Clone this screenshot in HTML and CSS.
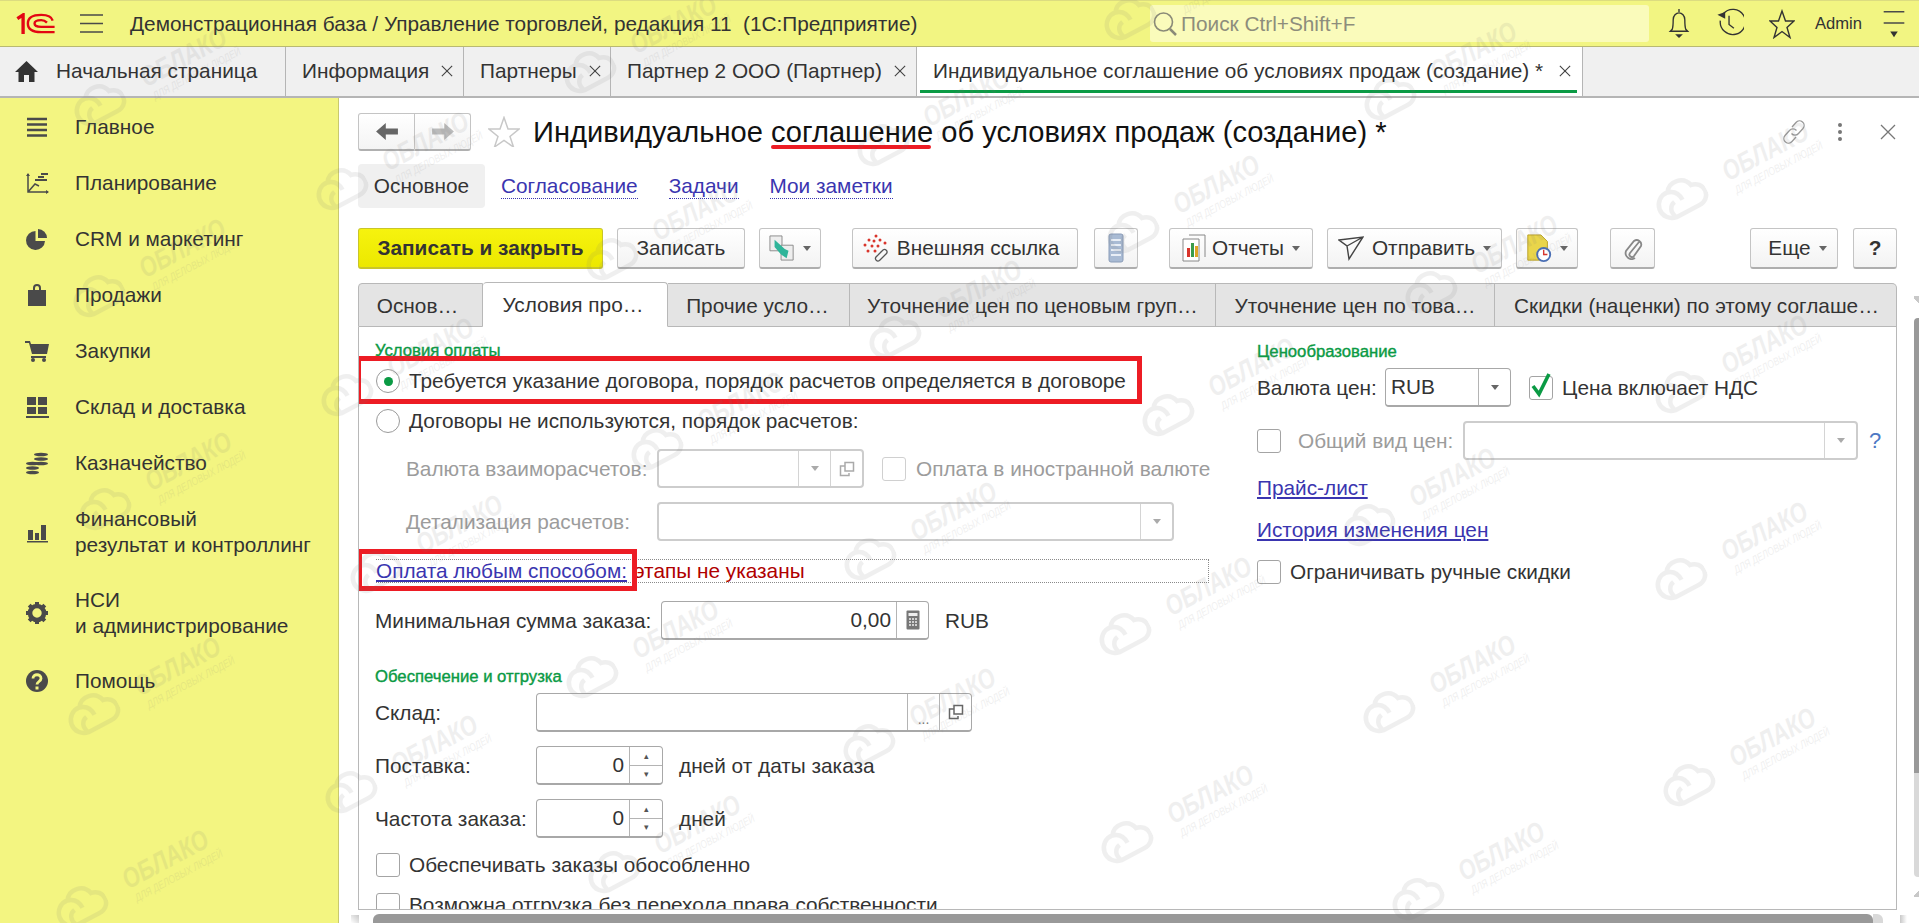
FILE: index.html
```html
<!DOCTYPE html>
<html lang="ru">
<head>
<meta charset="utf-8">
<title>Индивидуальное соглашение</title>
<link rel="stylesheet" href="styles.css">
</head>
<body>
<svg class="defs" width="0" height="0" aria-hidden="true">
  <symbol id="cloud" viewBox="0 0 60 46"><path d="M16 41H45A12 12 0 0 0 47 17A15 15 0 0 0 20 12A14.500 14.500 0 0 0 16 41ZM20 12C28 14 31 20 31 27M16 41C12 32 16 26 22 25" fill="none" stroke="currentColor" stroke-width="5"/></symbol>
  <symbol id="copy" viewBox="0 0 16 16"><path d="M6 1.500h8.500v8.500H6zM6 5H1.500v9.500H10V12" fill="none" stroke="#666" stroke-width="1.500"/></symbol>
  <symbol id="arrowd" viewBox="0 0 8 5"><path d="M0 0h8L4 5z" fill="#666"/></symbol>
</svg>
<div class="app">
  <header class="topbar">
    <svg class="logo" viewBox="0 0 42 22"><path d="M2 6l6-4v20" fill="none" stroke="#e30613" stroke-width="3.500"/><path d="M39 8C38 4 34 2 27 2 18 2 13 5 13 11s5 9 14 9h14" fill="none" stroke="#e30613" stroke-width="2.500"/><path d="M33 10C31 8 29 7.500 27 7.500c-5 0-7 1.500-7 3.500s2 3.500 7 3.500h14" fill="none" stroke="#e30613" stroke-width="2.500"/></svg>
    <svg class="burger" viewBox="0 0 23 19"><path d="M0 1h23M0 9.500h23M0 18h23" stroke="#4a4a4a" stroke-width="1.700"/></svg>
    <div class="apptitle">Демонстрационная база / Управление торговлей, редакция 11&nbsp; (1С:Предприятие)</div>
    <div class="search">
      <svg class="search-ic" viewBox="0 0 24 26"><circle cx="10.500" cy="11" r="9" fill="none" stroke="#8a8a78" stroke-width="1.600"/><path d="M17 18l6 6" stroke="#8a8a78" stroke-width="2.500"/></svg>
      <span>Поиск Ctrl+Shift+F</span>
    </div>
    <div class="topicons">
      <svg class="ti-bell" viewBox="0 0 24 32"><path d="M12 1v3M5 22c1-3 1-6 1-10 0-4 3-7 6-7s6 3 6 7c0 4 0 7 1 10l2 2H3z" fill="none" stroke="#333" stroke-width="1.400"/><path d="M8 27h8l-4 4z" fill="#333"/></svg>
      <svg class="ti-hist" viewBox="0 0 28 32"><path d="M7 6a13 13 0 1 1-3 7M13 8v9l5 4" fill="none" stroke="#333" stroke-width="1.400"/><path d="M1 7l8-3v7z" fill="#333"/></svg>
      <svg class="ti-star" viewBox="0 0 26 30"><path d="M13 2l3.500 10H25l-7 6.500 3 10-8-6-8 6 3-10L1 12h8.500z" fill="none" stroke="#333" stroke-width="1.400"/></svg>
      <span class="admin">Admin</span>
      <svg class="ti-menu" viewBox="0 0 24 32"><path d="M1 3h22M1 15h22" stroke="#4a4a4a" stroke-width="1.700"/><path d="M8 24h8l-4 6z" fill="#333"/></svg>
    </div>
  </header>

  <nav class="opentabs">
    <div class="ot ot-home">
      <svg class="home-ic" viewBox="0 0 23 22"><path d="M11.500 1L23 12h-3.500v10h-5.500v-7H9v7H3.500V12H0z" fill="#333"/></svg>
      <span>Начальная страница</span>
    </div>
    <div class="ot ot-a"><span>Информация</span><svg class="ot-x" viewBox="0 0 14 14"><path d="M1 1l12 12M13 1L1 13" stroke="#444" stroke-width="1.300"/></svg></div>
    <div class="ot ot-b"><span>Партнеры</span><svg class="ot-x" viewBox="0 0 14 14"><path d="M1 1l12 12M13 1L1 13" stroke="#444" stroke-width="1.300"/></svg></div>
    <div class="ot ot-c"><span>Партнер 2 ООО (Партнер)</span><svg class="ot-x" viewBox="0 0 14 14"><path d="M1 1l12 12M13 1L1 13" stroke="#444" stroke-width="1.300"/></svg></div>
    <div class="ot ot-active"><span>Индивидуальное соглашение об условиях продаж (создание) *</span><svg class="ot-x" viewBox="0 0 14 14"><path d="M1 1l12 12M13 1L1 13" stroke="#444" stroke-width="1.300"/></svg></div>
  </nav>

  <div class="workspace">
    <aside class="sidebar">
      <div class="sitem"><svg class="sic" viewBox="0 0 24 24"><path d="M2 4h20M2 9.500h20M2 15h20M2 20.500h20" stroke="#4a4a4a" stroke-width="2.600"/></svg><span>Главное</span></div>
      <div class="sitem"><svg class="sic" viewBox="0 0 24 24"><path d="M3 3v18h20M3 21l7-8 4 2" fill="none" stroke="#4a4a4a" stroke-width="1.500"/><path d="M1 5l2-3 2 3zM21 19l3 2-3 2z" fill="#4a4a4a"/><path d="M10 9h6M13 6h6M16 3h7M16 9h6" stroke="#4a4a4a" stroke-width="2.200"/></svg><span>Планирование</span></div>
      <div class="sitem"><svg class="sic" viewBox="0 0 24 24"><path d="M10.500 4a9.500 9.500 0 1 0 9.500 10H10.500z" fill="#4a4a4a"/><path d="M13 2a9 9 0 0 1 9 9h-9z" fill="#4a4a4a"/></svg><span>CRM и маркетинг</span></div>
      <div class="sitem"><svg class="sic" viewBox="0 0 24 24"><path d="M3 7h5V5a4 4 0 0 1 8 0v2h5v16H3zM10 7h4V5a2 2 0 0 0-4 0z" fill="#4a4a4a" fill-rule="evenodd"/></svg><span>Продажи</span></div>
      <div class="sitem"><svg class="sic" viewBox="0 0 24 24"><path d="M0 2h5l1 3h18l-2 10H7L4 4H0z" fill="#4a4a4a"/><path d="M6 17h15v2H6z" fill="#4a4a4a"/><circle cx="8" cy="21" r="2" fill="#4a4a4a"/><circle cx="19" cy="21" r="2" fill="#4a4a4a"/></svg><span>Закупки</span></div>
      <div class="sitem"><svg class="sic" viewBox="0 0 24 24"><path d="M2 2h9v8H2zM13 2h9v8h-9zM2 12h9v7H2zM13 12h9v7h-9zM1 21h23v2H1z" fill="#4a4a4a"/></svg><span>Склад и доставка</span></div>
      <div class="sitem"><svg class="sic" viewBox="0 0 24 24"><g fill="#4a4a4a"><ellipse cx="16" cy="3.500" rx="7" ry="1.800"/><ellipse cx="16" cy="8" rx="7" ry="1.800"/><ellipse cx="16" cy="12.500" rx="7" ry="1.800"/><ellipse cx="7.500" cy="12.500" rx="6.500" ry="1.800"/><ellipse cx="7.500" cy="17" rx="6.500" ry="1.800"/><ellipse cx="7.500" cy="21.500" rx="6.500" ry="1.800"/></g></svg><span>Казначейство</span></div>
      <div class="sitem sitem-2"><svg class="sic" viewBox="0 0 24 24"><path d="M3 10h5v10H3zM10 13h4v7h-4zM16 5h5v15h-5zM2 21h21v1.500H2z" fill="#4a4a4a"/></svg><span>Финансовый<br>результат и контроллинг</span></div>
      <div class="sitem sitem-2"><svg class="sic" viewBox="0 0 24 24"><circle cx="12" cy="12" r="7" fill="none" stroke="#4a4a4a" stroke-width="4.600"/><path d="M12 1v5M12 18v5M1 12h5M18 12h5M4.200 4.200l3.500 3.500M16.300 16.300l3.500 3.500M4.200 19.800l3.500-3.500M16.300 7.700l3.500-3.500" stroke="#4a4a4a" stroke-width="4"/></svg><span>НСИ<br>и администрирование</span></div>
      <div class="sitem"><svg class="sic" viewBox="0 0 24 24"><circle cx="12" cy="12" r="11" fill="#4a4a4a"/><path d="M8 9.500c0-5 8-5 8 0 0 3-4 3-4 6" fill="none" stroke="#f3f581" stroke-width="2.800"/><path d="M10.500 17.500h3v3h-3z" fill="#f3f581"/></svg><span>Помощь</span></div>
    </aside>

    <main class="main">
      <div class="formhead">
        <div class="navgroup">
          <button class="navbtn nav-l"><svg viewBox="0 0 18 14"><path d="M8 0L0 7l8 7v-4.500h10v-5H8z" fill="#666"/></svg></button>
          <button class="navbtn nav-r"><svg viewBox="0 0 18 14"><path d="M10 0l8 7-8 7v-4.500H0v-5h10z" fill="#bbb"/></svg></button>
        </div>
        <svg class="favstar" viewBox="0 0 32 31"><path d="M16 1.500l4 11.500h11l-9 7.500 3.500 10.500-9.500-6.500-9.500 6.500L10 20.500 1 13h11z" fill="none" stroke="#c8c8c8" stroke-width="1.500"/></svg>
        <h1 class="formtitle">Индивидуальное <span class="marked">соглашение</span> об условиях продаж (создание) *</h1>
        <div class="headicons">
          <svg class="hi-link" viewBox="0 0 26 26"><path d="M11 8l4-4.500a4.500 4.500 0 0 1 7 6l-4.500 5a4.500 4.500 0 0 1-7 0M15 18l-4 4.500a4.500 4.500 0 0 1-7-6l4.500-5a4.500 4.500 0 0 1 7 0" fill="none" stroke="#999" stroke-width="1.300"/></svg>
          <svg class="hi-dots" viewBox="0 0 6 20"><circle cx="3" cy="3" r="2" fill="#777"/><circle cx="3" cy="10" r="2" fill="#777"/><circle cx="3" cy="17" r="2" fill="#777"/></svg>
          <svg class="hi-x" viewBox="0 0 16 16"><path d="M1 1l14 14M15 1L1 15" stroke="#777" stroke-width="1.300"/></svg>
        </div>
      </div>

      <div class="sections">
        <span class="sec sec-on">Основное</span>
        <a class="sec sec-link sec-1">Согласование</a>
        <a class="sec sec-link sec-2">Задачи</a>
        <a class="sec sec-link sec-3">Мои заметки</a>
      </div>

      <div class="toolbar">
        <button class="btn b-save">Записать и закрыть</button>
        <button class="btn b-write">Записать</button>
        <button class="btn b-gen"><svg class="bic" viewBox="0 0 28 28"><path d="M1 1h13v16H1z" fill="#eee" stroke="#888"/><path d="M13 11h13v16H13z" fill="#eee" stroke="#888"/><path d="M6 5l11 10 4 2-2 8-6-4-7-8z" fill="#2fb59a"/></svg><svg class="caret" viewBox="0 0 8 5"><use href="#arrowd"/></svg></button>
        <button class="btn b-ext"><svg class="bic bic-ext" viewBox="0 0 26 28"><g fill="#d9342b"><circle cx="13" cy="2" r="1.500"/><circle cx="6" cy="6" r="1.500"/><circle cx="11" cy="7" r="1.500"/><circle cx="17" cy="6" r="1.500"/><circle cx="22" cy="9" r="1.500"/><circle cx="2" cy="11" r="1.500"/><circle cx="9" cy="12" r="1.500"/><circle cx="15" cy="12" r="1.500"/><circle cx="5" cy="17" r="1.500"/><circle cx="12" cy="17" r="1.500"/></g><path d="M15 21l5-5a2.500 2.500 0 0 1 3.500 3.500l-7 7a2.500 2.500 0 0 1-3.500-3.500l5-5" fill="none" stroke="#555" stroke-width="1.300"/></svg><span>Внешняя ссылка</span></button>
        <button class="btn b-db"><svg class="bic bic-db" viewBox="0 0 16 30"><rect x="1" y="1" width="14" height="28" rx="2" fill="#a9bbd4" stroke="#8a9cb8"/><path d="M3 7h10M3 12h10M3 17h10M3 22h10" stroke="#e8eef6" stroke-width="2"/></svg></button>
        <button class="btn b-rep"><svg class="bic" viewBox="0 0 24 28"><path d="M1 5h16v22H1z" fill="#fff" stroke="#888"/><path d="M7 1h16v22" fill="none" stroke="#888"/><path d="M5 14h3v9H5z" fill="#d9342b"/><path d="M9 9h3v14H9z" fill="#3a9b4a"/><path d="M13 12h3v11h-3z" fill="#e0a526"/></svg><span>Отчеты</span><svg class="caret" viewBox="0 0 8 5"><use href="#arrowd"/></svg></button>
        <button class="btn b-send"><svg class="bic" viewBox="0 0 26 26"><path d="M1 5l24-3-14 22-2-13zM9 11L25 2" fill="none" stroke="#444" stroke-width="1.400"/></svg><span>Отправить</span><svg class="caret" viewBox="0 0 8 5"><use href="#arrowd"/></svg></button>
        <button class="btn b-misc"><svg class="bic" viewBox="0 0 26 30"><path d="M1 1h14l7 7v20H1z" fill="#e9d54a" stroke="#b89e22"/><circle cx="18" cy="22" r="7" fill="#fff" stroke="#4a6fb5" stroke-width="2"/><path d="M18 17v5h4" stroke="#d9342b" stroke-width="1.500" fill="none"/></svg><svg class="caret" viewBox="0 0 8 5"><use href="#arrowd"/></svg></button>
        <button class="btn b-clip"><svg class="bic" viewBox="0 0 20 24"><path d="M16 6L7 17a2.500 2.500 0 0 0 4 3l7-10a4.500 4.500 0 0 0-7-5L3 15a6 6 0 0 0 9 7" fill="none" stroke="#888" stroke-width="1.800"/></svg></button>
        <button class="btn b-more"><span>Еще</span><svg class="caret" viewBox="0 0 8 5"><use href="#arrowd"/></svg></button>
        <button class="btn b-help">?</button>
      </div>

      <div class="formtabs">
        <div class="ft ft-1">Основ…</div>
        <div class="ft ft-2 ft-on">Условия про…</div>
        <div class="ft ft-3">Прочие усло…</div>
        <div class="ft ft-4">Уточнение цен по ценовым груп…</div>
        <div class="ft ft-5">Уточнение цен по това…</div>
        <div class="ft ft-6">Скидки (наценки) по этому соглаше…</div>
      </div>

      <div class="panel">
        <section class="col-left">
          <div class="grouphead gh-1">Условия оплаты</div>
          <div class="row r-radio1"><span class="radio radio-on"></span><span>Требуется указание договора, порядок расчетов определяется в договоре</span><div class="redbox rb-1"></div></div>
          <div class="row r-radio2"><span class="radio"></span><span>Договоры не используются, порядок расчетов:</span></div>
          <div class="row r-cur">
            <label class="lab lab-ind muted">Валюта взаиморасчетов:</label>
            <div class="field f-cur dim"><span class="fbody"></span><span class="fbtn"><svg class="tri" viewBox="0 0 8 5"><use href="#arrowd"/></svg></span><span class="fbtn"><svg class="cop" viewBox="0 0 16 16"><use href="#copy"/></svg></span></div>
            <span class="check dim ck-cur"></span><span class="muted">Оплата в иностранной валюте</span>
          </div>
          <div class="row r-det">
            <label class="lab lab-ind muted">Детализация расчетов:</label>
            <div class="field f-det dim"><span class="fbody"></span><span class="fbtn"><svg class="tri" viewBox="0 0 8 5"><use href="#arrowd"/></svg></span></div>
          </div>
          <div class="row r-pay"><a class="link">Оплата любым способом:</a><span class="warn">этапы не указаны</span><div class="redbox rb-2"></div></div>
          <div class="row r-min">
            <label class="lab lab-min">Минимальная сумма заказа:</label>
            <div class="field f-min"><span class="fbody num">0,00</span><span class="fbtn fbtn-calc"><svg class="calc" viewBox="0 0 14 20"><rect x=".5" y=".5" width="13" height="19" rx="1" fill="#777"/><path d="M2.500 3h9v3h-9z" fill="#eee"/><path d="M3 9h2M6 9h2M9 9h2M3 12h2M6 12h2M9 12h2M3 15h2M6 15h2M9 15h2" stroke="#eee" stroke-width="1.600"/></svg></span></div>
            <span class="unit">RUB</span>
          </div>
          <div class="grouphead gh-2">Обеспечение и отгрузка</div>
          <div class="row r-wh">
            <label class="lab lab-s">Склад:</label>
            <div class="field f-wh"><span class="fbody"></span><span class="fbtn fbtn-dots">...</span><span class="fbtn"><svg class="cop" viewBox="0 0 16 16"><use href="#copy"/></svg></span></div>
          </div>
          <div class="row r-sp1">
            <label class="lab lab-s">Поставка:</label>
            <div class="field f-spin"><span class="fbody num">0</span><span class="spin"><i>▴</i><i>▾</i></span></div>
            <span class="after">дней от даты заказа</span>
          </div>
          <div class="row r-sp2">
            <label class="lab lab-s">Частота заказа:</label>
            <div class="field f-spin"><span class="fbody num">0</span><span class="spin"><i>▴</i><i>▾</i></span></div>
            <span class="after">дней</span>
          </div>
          <div class="row r-ck1"><span class="check ck-l"></span><span>Обеспечивать заказы обособленно</span></div>
          <div class="row r-ck2"><span class="check ck-l"></span><span>Возможна отгрузка без перехода права собственности</span></div>
        </section>

        <section class="col-right">
          <div class="grouphead gh-3">Ценообразование</div>
          <div class="row r-pc">
            <label class="lab lab-pc">Валюта цен:</label>
            <div class="field f-pc"><span class="fbody fbody-t">RUB</span><span class="fbtn"><svg class="tri" viewBox="0 0 8 5"><use href="#arrowd"/></svg></span></div>
            <span class="check ck-vat"><svg viewBox="0 0 22 26"><path d="M3 14l6 8L19 2" fill="none" stroke="#0a9a44" stroke-width="3.600"/></svg></span><span>Цена включает НДС</span>
          </div>
          <div class="row r-gen">
            <span class="check ck-gen"></span><label class="lab muted lab-gen">Общий вид цен:</label>
            <div class="field f-gen dim"><span class="fbody"></span><span class="fbtn"><svg class="tri" viewBox="0 0 8 5"><use href="#arrowd"/></svg></span></div>
            <span class="qm">?</span>
          </div>
          <div class="row r-l1"><a class="link">Прайс-лист</a></div>
          <div class="row r-l2"><a class="link">История изменения цен</a></div>
          <div class="row r-ck3"><span class="check ck-l3"></span><span>Ограничивать ручные скидки</span></div>
        </section>
      </div>
    </main>
  </div>

  <div class="vscroll"><i class="vs-up"></i><i class="vs-thumb"></i><i class="vs-rest"></i><i class="vs-down"></i></div>
  <div class="hscroll"><i class="hs-left"></i><i class="hs-thumb"></i><i class="hs-rest"></i><i class="hs-right"></i></div>

  <div class="wms" aria-hidden="true">
    <div class="wm w1"><svg><use href="#cloud"/></svg><b>ОБЛАКО</b><em>ДЛЯ ДЕЛОВЫХ ЛЮДЕЙ</em></div>
    <div class="wm w2"><svg><use href="#cloud"/></svg><b>ОБЛАКО</b><em>ДЛЯ ДЕЛОВЫХ ЛЮДЕЙ</em></div>
    <div class="wm w3"><svg><use href="#cloud"/></svg><b>ОБЛАКО</b><em>ДЛЯ ДЕЛОВЫХ ЛЮДЕЙ</em></div>
    <div class="wm w4"><svg><use href="#cloud"/></svg><b>ОБЛАКО</b><em>ДЛЯ ДЕЛОВЫХ ЛЮДЕЙ</em></div>
    <div class="wm w5"><svg><use href="#cloud"/></svg><b>ОБЛАКО</b><em>ДЛЯ ДЕЛОВЫХ ЛЮДЕЙ</em></div>
    <div class="wm w6"><svg><use href="#cloud"/></svg><b>ОБЛАКО</b><em>ДЛЯ ДЕЛОВЫХ ЛЮДЕЙ</em></div>
    <div class="wm w7"><svg><use href="#cloud"/></svg><b>ОБЛАКО</b><em>ДЛЯ ДЕЛОВЫХ ЛЮДЕЙ</em></div>
    <div class="wm w8"><svg><use href="#cloud"/></svg><b>ОБЛАКО</b><em>ДЛЯ ДЕЛОВЫХ ЛЮДЕЙ</em></div>
    <div class="wm w9"><svg><use href="#cloud"/></svg><b>ОБЛАКО</b><em>ДЛЯ ДЕЛОВЫХ ЛЮДЕЙ</em></div>
    <div class="wm w10"><svg><use href="#cloud"/></svg><b>ОБЛАКО</b><em>ДЛЯ ДЕЛОВЫХ ЛЮДЕЙ</em></div>
    <div class="wm w11"><svg><use href="#cloud"/></svg><b>ОБЛАКО</b><em>ДЛЯ ДЕЛОВЫХ ЛЮДЕЙ</em></div>
    <div class="wm w12"><svg><use href="#cloud"/></svg><b>ОБЛАКО</b><em>ДЛЯ ДЕЛОВЫХ ЛЮДЕЙ</em></div>
    <div class="wm w13"><svg><use href="#cloud"/></svg><b>ОБЛАКО</b><em>ДЛЯ ДЕЛОВЫХ ЛЮДЕЙ</em></div>
    <div class="wm w14"><svg><use href="#cloud"/></svg><b>ОБЛАКО</b><em>ДЛЯ ДЕЛОВЫХ ЛЮДЕЙ</em></div>
    <div class="wm w15"><svg><use href="#cloud"/></svg><b>ОБЛАКО</b><em>ДЛЯ ДЕЛОВЫХ ЛЮДЕЙ</em></div>
    <div class="wm w16"><svg><use href="#cloud"/></svg><b>ОБЛАКО</b><em>ДЛЯ ДЕЛОВЫХ ЛЮДЕЙ</em></div>
    <div class="wm w17"><svg><use href="#cloud"/></svg><b>ОБЛАКО</b><em>ДЛЯ ДЕЛОВЫХ ЛЮДЕЙ</em></div>
    <div class="wm w18"><svg><use href="#cloud"/></svg><b>ОБЛАКО</b><em>ДЛЯ ДЕЛОВЫХ ЛЮДЕЙ</em></div>
    <div class="wm w19"><svg><use href="#cloud"/></svg><b>ОБЛАКО</b><em>ДЛЯ ДЕЛОВЫХ ЛЮДЕЙ</em></div>
    <div class="wm w20"><svg><use href="#cloud"/></svg><b>ОБЛАКО</b><em>ДЛЯ ДЕЛОВЫХ ЛЮДЕЙ</em></div>
    <div class="wm w21"><svg><use href="#cloud"/></svg><b>ОБЛАКО</b><em>ДЛЯ ДЕЛОВЫХ ЛЮДЕЙ</em></div>
    <div class="wm w22"><svg><use href="#cloud"/></svg><b>ОБЛАКО</b><em>ДЛЯ ДЕЛОВЫХ ЛЮДЕЙ</em></div>
    <div class="wm w23"><svg><use href="#cloud"/></svg><b>ОБЛАКО</b><em>ДЛЯ ДЕЛОВЫХ ЛЮДЕЙ</em></div>
    <div class="wm w24"><svg><use href="#cloud"/></svg><b>ОБЛАКО</b><em>ДЛЯ ДЕЛОВЫХ ЛЮДЕЙ</em></div>
    <div class="wm w25"><svg><use href="#cloud"/></svg><b>ОБЛАКО</b><em>ДЛЯ ДЕЛОВЫХ ЛЮДЕЙ</em></div>
    <div class="wm w26"><svg><use href="#cloud"/></svg><b>ОБЛАКО</b><em>ДЛЯ ДЕЛОВЫХ ЛЮДЕЙ</em></div>
    <div class="wm w27"><svg><use href="#cloud"/></svg><b>ОБЛАКО</b><em>ДЛЯ ДЕЛОВЫХ ЛЮДЕЙ</em></div>
    <div class="wm w28"><svg><use href="#cloud"/></svg><b>ОБЛАКО</b><em>ДЛЯ ДЕЛОВЫХ ЛЮДЕЙ</em></div>
    <div class="wm w29"><svg><use href="#cloud"/></svg><b>ОБЛАКО</b><em>ДЛЯ ДЕЛОВЫХ ЛЮДЕЙ</em></div>
    <div class="wm w30"><svg><use href="#cloud"/></svg><b>ОБЛАКО</b><em>ДЛЯ ДЕЛОВЫХ ЛЮДЕЙ</em></div>
    <div class="wm w31"><svg><use href="#cloud"/></svg><b>ОБЛАКО</b><em>ДЛЯ ДЕЛОВЫХ ЛЮДЕЙ</em></div>
    <div class="wm w32"><svg><use href="#cloud"/></svg><b>ОБЛАКО</b><em>ДЛЯ ДЕЛОВЫХ ЛЮДЕЙ</em></div>
  </div>
</div>
</body>
</html>
```
FILE: styles.css
```css
* { box-sizing: border-box; }
html, body { margin: 0; padding: 0; height: 923px; overflow: hidden; }
body { font-family: "Liberation Sans", Arial, sans-serif; font-size: 20.8px; color: #333; background: #fff; }
.defs { position: absolute; }
button { font: inherit; color: inherit; }
.app { position: relative; width: 1919px; height: 923px; overflow: hidden; display: flex; flex-direction: column; }

/* top bar */
.topbar { height: 47px; flex: none; display: flex; align-items: center; background: #f2f582; border-top: 1px solid #dcdc80; border-bottom: 1px solid #b9b972; padding-left: 15px; }
.logo { width: 41px; height: 21px; flex: none; }
.burger { width: 23px; height: 19px; margin-left: 24px; flex: none; }
.apptitle { margin-left: 27px; width: 1020px; flex: none; white-space: nowrap; }
.search { width: 499px; height: 37px; flex: none; background: #fafbbb; border-radius: 3px; display: flex; align-items: center; padding-left: 3px; color: #8d8d7c; }
.search-ic { width: 24px; height: 26px; margin-right: 4px; flex: none; }
.topicons { display: flex; align-items: center; margin-left: 18px; }
.ti-bell { width: 24px; height: 31px; }
.ti-hist { width: 28px; height: 31px; margin-left: 25px; }
.ti-star { width: 26px; height: 30px; margin-left: 25px; }
.admin { font-size: 16.6px; margin-left: 20px; width: 47px; }
.ti-menu { width: 24px; height: 30px; margin-left: 20px; }

/* open windows */
.opentabs { height: 51px; flex: none; display: flex; background: #f0f0f0; border-bottom: 2px solid #b5b5b5; }
.ot { display: flex; align-items: center; border-right: 1px solid #b5b5b5; white-space: nowrap; height: 49px; padding-bottom: 2px; }
.ot-x { width: 12px; height: 12px; margin-left: 12px; flex: none; }
.ot-home { width: 286px; padding-left: 15px; }
.home-ic { width: 23px; height: 22px; margin-right: 18px; }
.ot-a { width: 178px; padding-left: 16px; }
.ot-b { width: 147px; padding-left: 16px; }
.ot-c { width: 306px; padding-left: 16px; }
.ot-active { width: 666px; padding-left: 16px; background: #fff; position: relative; }
.ot-active .ot-x { margin-left: 16px; }
.ot-active::after { content: ""; position: absolute; left: 3px; right: 5px; bottom: 3px; height: 3px; background: #0b9b45; }

/* workspace */
.workspace { flex: 1; display: flex; min-height: 0; }
.sidebar { width: 339px; flex: none; background: #f3f581; border-right: 1px solid #c9c96e; padding-top: 1px; }
.sitem { height: 56px; display: flex; align-items: center; padding-left: 25px; line-height: 26px; color: #333; }
.sitem-2 { height: 81px; }
.sic { width: 24px; height: 24px; margin-right: 26px; flex: none; }

.main { flex: 1; min-width: 0; padding: 0 22px 0 19px; display: flex; flex-direction: column; height: 825px; }

.formhead { height: 66px; flex: none; display: flex; align-items: center; padding-top: 1px; position: relative; }
.navgroup { display: flex; width: 113px; height: 38px; flex: none; }
.navbtn { flex: 1; padding: 0; background: linear-gradient(#fff, #f4f4f4); border: 1px solid #c4c4c4; border-bottom: 2px solid #b0b0b0; display: flex; align-items: center; justify-content: center; }
.navbtn svg { width: 24px; height: 17px; }
.nav-l { border-radius: 3px 0 0 3px; flex: 0 0 57px; }
.nav-r { border-radius: 0 3px 3px 0; border-left: 0; }
.favstar { width: 32px; height: 31px; margin-left: 17px; flex: none; }
.formtitle { margin: 0 0 0 13px; font-size: 29.1px; font-weight: 400; color: #111; white-space: nowrap; line-height: 38px; }
.marked { position: relative; }
.marked::after { content: ""; position: absolute; left: 0; right: 2px; bottom: -1px; height: 4px; background: #ed1c24; border-radius: 2px; }
.headicons { margin-left: auto; display: flex; align-items: center; }
.hi-link { width: 26px; height: 26px; }
.hi-dots { width: 6px; height: 20px; margin-left: 30px; }
.hi-x { width: 16px; height: 16px; margin-left: 37px; margin-right: 1px; }

.sections { height: 44px; flex: none; display: flex; align-items: center; }
.sec { display: block; white-space: nowrap; }
.sec-on { width: 127px; height: 44px; line-height: 44px; text-align: center; background: #f0f0f0; border-radius: 4px; }
.sec-link { color: #3a35b0; border-bottom: 1px dotted #3a35b0; line-height: 24px; }
.sec-1 { margin-left: 16px; }
.sec-2 { margin-left: 31px; }
.sec-3 { margin-left: 31px; }

.toolbar { height: 41px; margin-top: 20px; flex: none; display: flex; }
.btn { height: 41px; padding: 0; flex: none; display: flex; align-items: center; justify-content: center; background: linear-gradient(#fff, #f3f3f3); border: 1px solid #c4c4c4; border-bottom: 2px solid #aeaeae; border-radius: 3px; white-space: nowrap; }
.bic { width: 26px; height: 28px; flex: none; }
.caret { width: 8px; height: 5px; margin-left: 8px; flex: none; }
.b-save { width: 245px; background: linear-gradient(#f6f30e, #ece800); border-color: #c9c52a; font-weight: 700; color: #333; }
.b-write { width: 128px; margin-left: 14px; }
.b-gen { width: 62px; margin-left: 14px; }
.b-ext { width: 226px; margin-left: 31px; padding-right: 8px; }
.b-ext .bic { margin-right: 8px; }
.b-db { width: 44px; margin-left: 16px; }
.bic-db { width: 16px; height: 30px; }
.b-rep { width: 144px; margin-left: 31px; }
.b-rep .bic { margin-right: 6px; width: 24px; }
.b-send { width: 175px; margin-left: 14px; }
.b-send .bic { margin-right: 8px; }
.b-misc { width: 62px; margin-left: 14px; }
.b-clip { width: 45px; margin-left: 32px; }
.b-clip .bic { width: 20px; height: 24px; }
.b-more { width: 88px; margin-left: 95px; padding-left: 7px; }
.b-help { width: 44px; margin-left: 15px; font-weight: 700; }

.formtabs { height: 44px; margin-top: 14px; flex: none; display: flex; align-items: stretch; }
.ft { display: flex; align-items: center; justify-content: center; white-space: nowrap; background: #e4e4e4; border: 1px solid #b8b8b8; border-left: 0; flex: none; height: 44px; padding-top: 1px; }
.ft-1 { width: 125px; border-left: 1px solid #b8b8b8; border-radius: 4px 0 0 0; padding-right: 6px; }
.ft-2 { width: 185px; padding-right: 4px; }
.ft-3 { width: 182px; padding-right: 2px; }
.ft-4 { width: 366px; }
.ft-5 { width: 279px; }
.ft-6 { width: 402px; border-radius: 0 5px 0 0; padding-left: 2px; }
.ft-on { background: #fff; border-bottom-color: #fff; border-radius: 4px 4px 0 0; height: 45px; margin-top: -1px; position: relative; }

.panel { height: 583px; flex: none; display: flex; border: 1px solid #b8b8b8; border-top: 0; overflow: hidden; background: #fff; }
.col-left { width: 898px; flex: none; padding-left: 16px; }
.col-right { flex: 1; }
.grouphead { height: 20px; line-height: 20px; font-size: 16.7px; color: #0a9a44; -webkit-text-stroke: .4px #0a9a44; white-space: nowrap; }
.gh-1 { margin-top: 14px; }
.gh-2 { margin-top: 27px; }
.gh-3 { margin-top: 15px; }
.row { display: flex; align-items: center; white-space: nowrap; position: relative; }

.radio { width: 24px; height: 24px; border-radius: 50%; border: 1px solid #9a9a9a; margin-right: 9px; margin-left: 1px; flex: none; display: flex; align-items: center; justify-content: center; background: #fff; }
.radio-on::after { content: ""; width: 9px; height: 9px; border-radius: 50%; background: #0a9a44; }
.r-radio1 { height: 32px; margin-top: 4px; }
.r-radio2 { height: 32px; margin-top: 8px; }
.r-cur { height: 39px; margin-top: 12px; }
.r-det { height: 39px; margin-top: 14px; }
.r-pay { height: 24px; margin-top: 18px; width: 833px; margin-left: 1px; border: 1px dotted #8a8a8a; border-left: 0; }
.r-min { height: 39px; margin-top: 18px; }
.r-wh { height: 39px; margin-top: 6px; }
.r-sp1 { height: 39px; margin-top: 14px; }
.r-sp2 { height: 39px; margin-top: 14px; }
.r-ck1 { height: 24px; margin-top: 15px; }
.r-ck2 { height: 24px; margin-top: 16px; }
.r-pc { height: 39px; margin-top: 6px; }
.r-gen { height: 39px; margin-top: 14px; }
.r-l1 { height: 24px; margin-top: 16px; }
.r-l2 { height: 24px; margin-top: 18px; }
.r-ck3 { height: 24px; margin-top: 18px; }

.lab { display: block; flex: none; }
.lab-ind { width: 282px; padding-left: 31px; }
.lab-min { width: 286px; }
.lab-s { width: 161px; }
.lab-pc { width: 128px; }
.lab-gen { width: 165px; }
.muted { color: #9c9c9c; }

.field { height: 39px; flex: none; display: flex; border: 1px solid #a8a8a8; border-bottom-width: 2px; border-radius: 4px; background: #fff; overflow: hidden; }
.field.dim { border-color: #cdcdcd; border-width: 2px 2px 2px 2px; }
.fbody { flex: 1; display: flex; align-items: center; }
.fbody-t { padding-left: 5px; }
.num { justify-content: flex-end; padding-right: 5px; }
.fbtn { width: 32px; flex: none; border-left: 1px solid #b4b4b4; display: flex; align-items: center; justify-content: center; }
.dim .fbtn { border-left-color: #d4d4d4; }
.tri { width: 8px; height: 5px; }
.dim .tri { opacity: .55; }
.cop { width: 16px; height: 16px; }
.dim .cop { opacity: .55; }
.fbtn-dots { color: #777; align-items: flex-end; padding-bottom: 4px; line-height: 1; font-size: 14px; }
.calc { width: 14px; height: 20px; }
.f-cur { width: 207px; }
.f-det { width: 517px; }
.f-min { width: 268px; }
.f-wh { width: 436px; }
.f-spin { width: 127px; }
.f-pc { width: 126px; }
.f-gen { width: 395px; }
.spin { width: 33px; flex: none; border-left: 1px solid #b4b4b4; display: flex; flex-direction: column; }
.spin i { flex: 1; font-style: normal; font-size: 9px; color: #555; display: flex; align-items: center; justify-content: center; }
.spin i + i { border-top: 1px solid #b4b4b4; }
.check { width: 24px; height: 24px; flex: none; border: 1px solid #a4a4a4; border-radius: 3px; background: #fff; display: block; }
.check.dim { border-color: #d0d0d0; }
.check svg { display: block; width: 22px; height: 26px; margin-top: -5px; }
.ck-cur { margin-left: 18px; margin-right: 10px; }
.ck-l { margin-left: 1px; margin-right: 9px; }
.ck-vat { margin-left: 18px; margin-right: 9px; }
.ck-gen { margin-right: 17px; }
.ck-l3 { margin-right: 9px; }
.qm { margin-left: 11px; color: #4d78c4; font-size: 22px; }
.unit { margin-left: 16px; }
.after { margin-left: 16px; }
.link { color: #3a35b0; text-decoration: underline; }
.warn { color: #b00000; margin-left: 7px; }
.redbox { position: absolute; border: 5px solid #ed1c24; pointer-events: none; }
.rb-1 { left: -19px; top: -9px; width: 786px; height: 48px; }
.rb-2 { left: -19px; top: -11px; width: 280px; height: 42px; }

/* scrollbars */
.vscroll { position: absolute; right: 0; top: 296px; bottom: 24px; width: 5px; display: flex; flex-direction: column; }
.vscroll i { display: block; }
.vs-up { height: 10px; margin-bottom: 12px; background: linear-gradient(45deg, transparent 50%, #c8c8c8 50%); }
.vs-thumb { height: 455px; background: #999; border-radius: 4px 0 0 0; }
.vs-rest { height: 104px; background: #d9d9d9; border-radius: 0 0 0 4px; }
.vs-down { height: 8px; margin-top: 12px; background: linear-gradient(135deg, transparent 50%, #c8c8c8 50%); }
.hscroll { position: absolute; left: 351px; right: 12px; bottom: 0; height: 9px; display: flex; align-items: flex-end; }
.hscroll i { display: block; }
.hs-left { width: 8px; height: 8px; margin-right: 14px; background: linear-gradient(45deg, transparent 0, #c8c8c8 100%); }
.hs-thumb { width: 1502px; height: 9px; background: #999; border-radius: 6px 6px 0 0; }
.hs-rest { width: 10px; height: 9px; background: #d9d9d9; border-radius: 0 6px 0 0; }
.hs-right { width: 7px; height: 8px; margin-left: 17px; background: linear-gradient(90deg, #c8c8c8, transparent); }

/* watermark */
.wms { position: absolute; inset: 0; pointer-events: none; opacity: .11; overflow: hidden; }
.wm { position: absolute; width: 0; height: 0; transform: rotate(-28deg); white-space: nowrap; color: #777; }
.wm svg { position: absolute; left: -27px; top: -21px; width: 54px; height: 42px; }
.wm b { position: absolute; left: 50px; top: -17px; font-size: 28px; line-height: 34px; font-weight: 700; font-style: italic; transform: scaleX(.78); transform-origin: 0 50%; }
.wm em { position: absolute; left: 52px; top: 14px; font-size: 11px; line-height: 13px; transform: scaleX(.78); transform-origin: 0 50%; }
.w1 { left: 98px; top: 103px; }
.w2 { left: 588px; top: 70px; }
.w3 { left: 1128px; top: 17px; }
.w4 { left: 1388px; top: 97px; }
.w5 { left: 97px; top: 294px; }
.w6 { left: 103px; top: 507px; }
.w7 { left: 92px; top: 712px; }
.w8 { left: 340px; top: 187px; }
.w9 { left: 345px; top: 393px; }
.w10 { left: 610px; top: 257px; }
.w11 { left: 881px; top: 143px; }
.w12 { left: 893px; top: 335px; }
.w13 { left: 1131px; top: 230px; }
.w14 { left: 1680px; top: 197px; }
.w15 { left: 1429px; top: 290px; }
.w16 { left: 655px; top: 447px; }
.w17 { left: 1166px; top: 413px; }
.w18 { left: 868px; top: 557px; }
.w19 { left: 374px; top: 570px; }
.w20 { left: 1123px; top: 632px; }
.w21 { left: 590px; top: 675px; }
.w22 { left: 867px; top: 743px; }
.w23 { left: 349px; top: 790px; }
.w24 { left: 612px; top: 870px; }
.w25 { left: 1387px; top: 710px; }
.w26 { left: 1687px; top: 783px; }
.w27 { left: 1125px; top: 840px; }
.w28 { left: 1416px; top: 897px; }
.w29 { left: 1367px; top: 523px; }
.w30 { left: 1679px; top: 390px; }
.w31 { left: 1679px; top: 577px; }
.w32 { left: 80px; top: 905px; }
```
